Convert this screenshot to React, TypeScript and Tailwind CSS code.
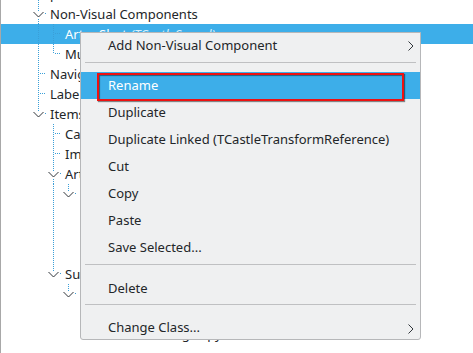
import React from "react";

type Row = {
  guides: boolean[];
  kind: "leaf" | "expand";
  last: boolean;
  text: string;
  sub?: string;
  selected?: boolean;
};

const rows: Row[] = [
  { guides: [], kind: "leaf", last: false, text: "pointer" },
  { guides: [], kind: "expand", last: false, text: "Non-Visual Components" },
  { guides: [true], kind: "leaf", last: false, text: "ArtooShot", sub: "(TCastleSound)", selected: true },
  { guides: [true], kind: "leaf", last: true, text: "Music (TCastleSound)" },
  { guides: [], kind: "leaf", last: false, text: "Navigation (TCastleWalkNavigation)" },
  { guides: [], kind: "leaf", last: false, text: "LabelFps (TCastleLabel)" },
  { guides: [], kind: "expand", last: true, text: "Items (TCastleRootTransform)" },
  { guides: [false], kind: "leaf", last: false, text: "Camera (TCastleCamera)" },
  { guides: [false], kind: "leaf", last: false, text: "ImageBackground (TCastleImageTransform)" },
  { guides: [false], kind: "expand", last: false, text: "Art (TCastleTransform)" },
  { guides: [false, true], kind: "expand", last: true, text: "Scene1 (TCastleScene)" },
  { guides: [false, true, false], kind: "leaf", last: false, text: "Tree1 (TCastleScene)" },
  { guides: [false, true, false], kind: "leaf", last: false, text: "Tree2 (TCastleScene)" },
  { guides: [false, true, false], kind: "leaf", last: true, text: "Rock (TCastleScene)" },
  { guides: [false], kind: "expand", last: true, text: "Sun (TCastleDirectionalLight)" },
  { guides: [false, false], kind: "expand", last: true, text: "SunGroup (TCastleTransform)" },
  { guides: [false, false, false], kind: "leaf", last: false, text: "Sphere (TCastleSphere)" },
  { guides: [false, false, false], kind: "leaf", last: true, text: "DecorationRing copy" },
];

const DOT = "#3a9fd8";

function GuideCell({ on }: { on: boolean }) {
  return (
    <svg width="15" height="20" className="shrink-0 block">
      {on && <line x1="7.5" y1="0" x2="7.5" y2="20" stroke={DOT} strokeWidth="1" strokeDasharray="1 1" />}
    </svg>
  );
}

function OwnCell({ kind, last }: { kind: "leaf" | "expand"; last: boolean }) {
  if (kind === "leaf") {
    return (
      <svg width="15" height="20" className="shrink-0 block">
        <line x1="7.5" y1="0" x2="7.5" y2={last ? 10 : 20} stroke={DOT} strokeWidth="1" strokeDasharray="1 1" />
        <line x1="9" y1="9.5" x2="15" y2="9.5" stroke={DOT} strokeWidth="1" strokeDasharray="1 1" />
      </svg>
    );
  }
  return (
    <svg width="15" height="20" className="shrink-0 block">
      <line x1="7.5" y1="0" x2="7.5" y2="7" stroke={DOT} strokeWidth="1" strokeDasharray="1 1" />
      {!last && <line x1="7.5" y1="15" x2="7.5" y2="20" stroke={DOT} strokeWidth="1" strokeDasharray="1 1" />}
      <line x1="14" y1="9.5" x2="15" y2="9.5" stroke={DOT} strokeWidth="1" />
      <polyline points="2.5,8 7.5,13 12.5,8" fill="none" stroke="#31363b" strokeWidth="1" />
    </svg>
  );
}

function TreeRow({ r }: { r: Row }) {
  return (
    <div
      className={
        "flex h-[20px] items-center pl-[30px] whitespace-nowrap " +
        (r.selected ? "bg-[#3daee9] text-white" : "text-[#232629]")
      }
    >
      {r.guides.map((g, i) => (
        <GuideCell key={i} on={g} />
      ))}
      <OwnCell kind={r.kind} last={r.last} />
      <span className="ml-[4px] leading-[20px]">
        {r.text}
        {r.sub && <span className="text-[#d6eefb] italic"> {r.sub}</span>}
      </span>
    </div>
  );
}

function Chevron() {
  return (
    <svg width="6" height="10" className="block shrink-0">
      <polyline points="0.5,0.5 5,5 0.5,9.5" fill="none" stroke="#31363b" strokeWidth="1" />
    </svg>
  );
}

function Item({ label }: { label: string }) {
  return (
    <div className="h-[27px] pl-[27px] leading-[27px] text-[#232629] whitespace-nowrap">{label}</div>
  );
}

export default function App() {
  return (
    <div
      className="relative w-[473px] h-[353px] overflow-hidden bg-white border-l border-[#a8a8a8] text-[13px]"
      style={{ fontFamily: '"Noto Sans", "Open Sans", sans-serif' }}
    >
      <div className="mt-[-16px] flex flex-col">
        {rows.map((r, i) => (
          <TreeRow key={i} r={r} />
        ))}
      </div>

      <div className="absolute left-[79px] top-[32px] w-[341px] h-[308px] border border-[#b6b7b9] rounded-b-[3px] bg-[#eff0f1] flex flex-col">
        <div className="h-[26px] flex items-start pl-[27px] pr-[6px] text-[#232629] whitespace-nowrap">
          <span className="leading-[24px] flex-1">Add Non-Visual Component</span>
          <div className="mt-[8px]">
            <Chevron />
          </div>
        </div>
        <div className="h-[13px] pt-[3px] px-[4px]">
          <div className="h-px bg-[#bfc0c2]" />
        </div>
        <div className="relative h-[27px] pl-[27px] leading-[27px] bg-[#3daee9] text-white whitespace-nowrap">
          Rename
          <div className="absolute left-[16px] top-[1px] w-[307px] h-[28px] border-2 border-[#ee1111] shadow-[1px_1px_1px_rgba(0,0,0,0.45),inset_1px_1px_1px_rgba(0,0,0,0.45)]" />
        </div>
        <Item label="Duplicate" />
        <Item label="Duplicate Linked (TCastleTransformReference)" />
        <Item label="Cut" />
        <Item label="Copy" />
        <Item label="Paste" />
        <Item label="Save Selected..." />
        <div className="h-[14px] pt-[3px] px-[4px]">
          <div className="h-px bg-[#bfc0c2]" />
        </div>
        <Item label="Delete" />
        <div className="h-[12px] pt-[2px] px-[4px]">
          <div className="h-px bg-[#bfc0c2]" />
        </div>
        <div className="h-[24px] flex items-start pl-[27px] pr-[6px] text-[#232629] whitespace-nowrap">
          <span className="leading-[27px] flex-1">Change Class...</span>
          <div className="mt-[10px]">
            <Chevron />
          </div>
        </div>
      </div>
    </div>
  );
}
